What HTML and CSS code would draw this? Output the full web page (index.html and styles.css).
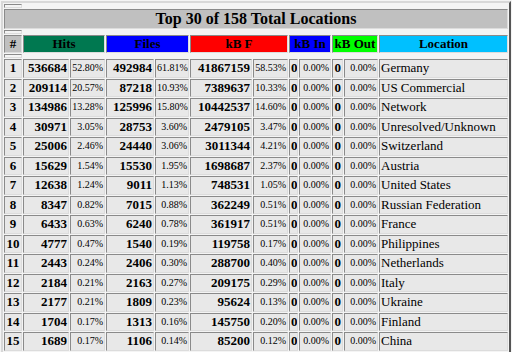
FILE: index.html
```html
<!DOCTYPE html>
<html>
<head>
    <title>Usage Statistics - Locations</title>
    <link rel="stylesheet" href="styles.css">
</head>
<body>
    <table class="stats">
        <colgroup>
            <col class="c-num"><col class="c-hits"><col class="c-pct">
            <col class="c-files"><col class="c-pct2"><col class="c-kbf">
            <col class="c-pct3"><col class="c-zero"><col class="c-pct4">
            <col class="c-zero2"><col class="c-pct5"><col class="c-loc">
        </colgroup>
        <tr><th class="spacer"></th></tr>
        <tr><th class="title" colspan="12">Top 30 of 158 Total Locations</th></tr>
        <tr><th class="spacer"></th></tr>
        <tr class="head">
            <th class="gray">#</th>
            <th class="hits" colspan="2">Hits</th>
            <th class="files" colspan="2">Files</th>
            <th class="kbf" colspan="2">kB F</th>
            <th class="kbin" colspan="2">kB In</th>
            <th class="kbout" colspan="2">kB Out</th>
            <th class="loc">Location</th>
        </tr>
        <tr><th class="spacer"></th></tr>
        <tbody id="rows"></tbody>
    </table>

    <script>
        const data = [
            [536684, '52.80%', 492984, '61.81%', 41867159, '58.53%', 'Germany'],
            [209114, '20.57%', 87218, '10.93%', 7389637, '10.33%', 'US Commercial'],
            [134986, '13.28%', 125996, '15.80%', 10442537, '14.60%', 'Network'],
            [30971, '3.05%', 28753, '3.60%', 2479105, '3.47%', 'Unresolved/Unknown'],
            [25006, '2.46%', 24440, '3.06%', 3011344, '4.21%', 'Switzerland'],
            [15629, '1.54%', 15530, '1.95%', 1698687, '2.37%', 'Austria'],
            [12638, '1.24%', 9011, '1.13%', 748531, '1.05%', 'United States'],
            [8347, '0.82%', 7015, '0.88%', 362249, '0.51%', 'Russian Federation'],
            [6433, '0.63%', 6240, '0.78%', 361917, '0.51%', 'France'],
            [4777, '0.47%', 1540, '0.19%', 119758, '0.17%', 'Philippines'],
            [2443, '0.24%', 2406, '0.30%', 288700, '0.40%', 'Netherlands'],
            [2184, '0.21%', 2163, '0.27%', 209175, '0.29%', 'Italy'],
            [2177, '0.21%', 1809, '0.23%', 95624, '0.13%', 'Ukraine'],
            [1704, '0.17%', 1313, '0.16%', 145750, '0.20%', 'Finland'],
            [1689, '0.17%', 1106, '0.14%', 85200, '0.12%', 'China'],
            [1502, '0.15%', 1320, '0.17%', 80341, '0.11%', 'Poland']
        ];

        let html = '';
        data.forEach((r, i) => {
            html += `<tr>
                <td class="idx">${i + 1}</td>
                <td class="val">${r[0]}</td><td class="pct">${r[1]}</td>
                <td class="val">${r[2]}</td><td class="pct">${r[3]}</td>
                <td class="val">${r[4]}</td><td class="pct">${r[5]}</td>
                <td class="val">0</td><td class="pct">0.00%</td>
                <td class="val">0</td><td class="pct">0.00%</td>
                <td class="name">${r[6]}</td>
            </tr>`;
        });
        document.getElementById('rows').innerHTML = html;
    </script>
</body>
</html>
```

FILE: styles.css
```css
body { margin: 0; padding: 1px 0 0 1px; background: #f4f4f4; font-family: "Liberation Serif", "Times New Roman", serif; color: #000; }
.stats { width: 510px; table-layout: fixed; border-collapse: separate; border-spacing: 1px; border: 2px solid; border-color: #d8d8d8 #555 #555 #d8d8d8; background: #f4f4f4; }
th, td { box-sizing: border-box; padding: 1px; border: 1px solid; border-color: #8a8a8a #dcdcdc #dcdcdc #8a8a8a; white-space: nowrap; overflow: hidden; }

.c-num { width: 18px; }
.c-hits { width: 46px; }
.c-pct { width: 35px; }
.c-files { width: 48px; }
.c-pct2 { width: 34px; }
.c-kbf { width: 62px; }
.c-pct3 { width: 35px; }
.c-zero { width: 9px; }
.c-pct4 { width: 32px; }
.c-zero2 { width: 11px; }
.c-pct5 { width: 34px; }
.c-loc { width: 129px; }

.spacer { height: 4px; padding: 0; }
.title { background: #c0c0c0; font-size: 16px; line-height: 16px; text-align: center; }
.head th { font-size: 13px; line-height: 14px; text-align: center; }
.gray { background: #c0c0c0; }
.hits { background: #007850; }
.files { background: #0000ff; }
.kbf { background: #ff0000; }
.kbin { background: #0000ff; }
.kbout { background: #00ff00; }
.loc { background: #00c0ff; }

td { background: #e8e8e8; font-size: 13px; line-height: 14.5px; }
.idx { text-align: center; font-weight: bold; }
.val { text-align: right; font-weight: bold; }
.pct { text-align: right; font-size: 10px; }
.name { text-align: left; }
```
